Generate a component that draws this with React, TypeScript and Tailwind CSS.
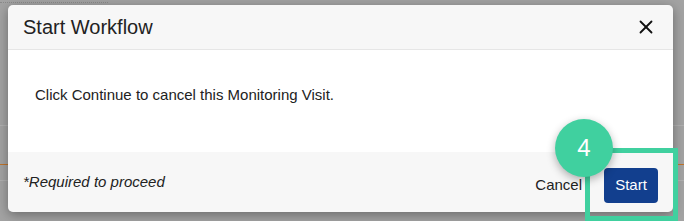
import { X } from 'lucide-react'

export default function App() {
  return (
    <div
      className="relative w-[684px] h-[221px] overflow-hidden bg-[#a3a3a3]"
      style={{ fontFamily: '"Liberation Sans", Arial, sans-serif' }}
    >
      {/* page under the backdrop */}
      <div className="flex flex-col">
        <div className="mt-[2px] w-[108px] border-t border-dotted border-[#8a8a8a]" />
        <div className="mt-[122px] h-px bg-[#b0b0b0]" />
        <div className="mt-[38px] h-px bg-[#c0742a]" />
        <div className="mt-[15px] h-px bg-[#b0b0b0]" />
      </div>

      {/* modal */}
      <div className="absolute left-[8px] top-[5px] w-[665px] h-[207px] rounded-[5px] overflow-hidden flex flex-col shadow-[0_3px_12px_rgba(0,0,0,0.35)]">
        <div className="h-[45px] shrink-0 bg-[#f7f7f7] border-b border-[#e6e6e6] flex items-center justify-between pl-[15px] pr-[16px]">
          <span className="text-[20px] text-[#222]">Start Workflow</span>
          <X size={22} strokeWidth={2} className="text-[#111]" />
        </div>
        <div className="flex-1 bg-white pl-[27px] pt-[34px]">
          <p className="text-[15px] text-[#222]">Click Continue to cancel this Monitoring Visit.</p>
        </div>
        <div className="h-[60px] shrink-0 bg-[#f7f7f7] flex items-center justify-between pl-[15px] pr-[15px]">
          <span className="text-[15px] italic text-[#222]">*Required to proceed</span>
          <div className="flex items-center gap-[22px] mt-[7px]">
            <span className="text-[15px] text-[#222]">Cancel</span>
            <button className="h-[35px] w-[54px] rounded-[4px] bg-[#123f8e] text-white text-[15px]">Start</button>
          </div>
        </div>
      </div>

      {/* callout */}
      <div className="absolute left-[585px] top-[148px] w-[93px] h-[73px] border-[5px] border-[#40d09f]" />
      <div className="absolute left-[555px] top-[119px] w-[58px] h-[58px] rounded-full bg-[#40d09f] shadow-[0_3px_8px_rgba(0,0,0,0.3)] flex items-center justify-center text-white text-[24px]">
        4
      </div>
    </div>
  )
}
